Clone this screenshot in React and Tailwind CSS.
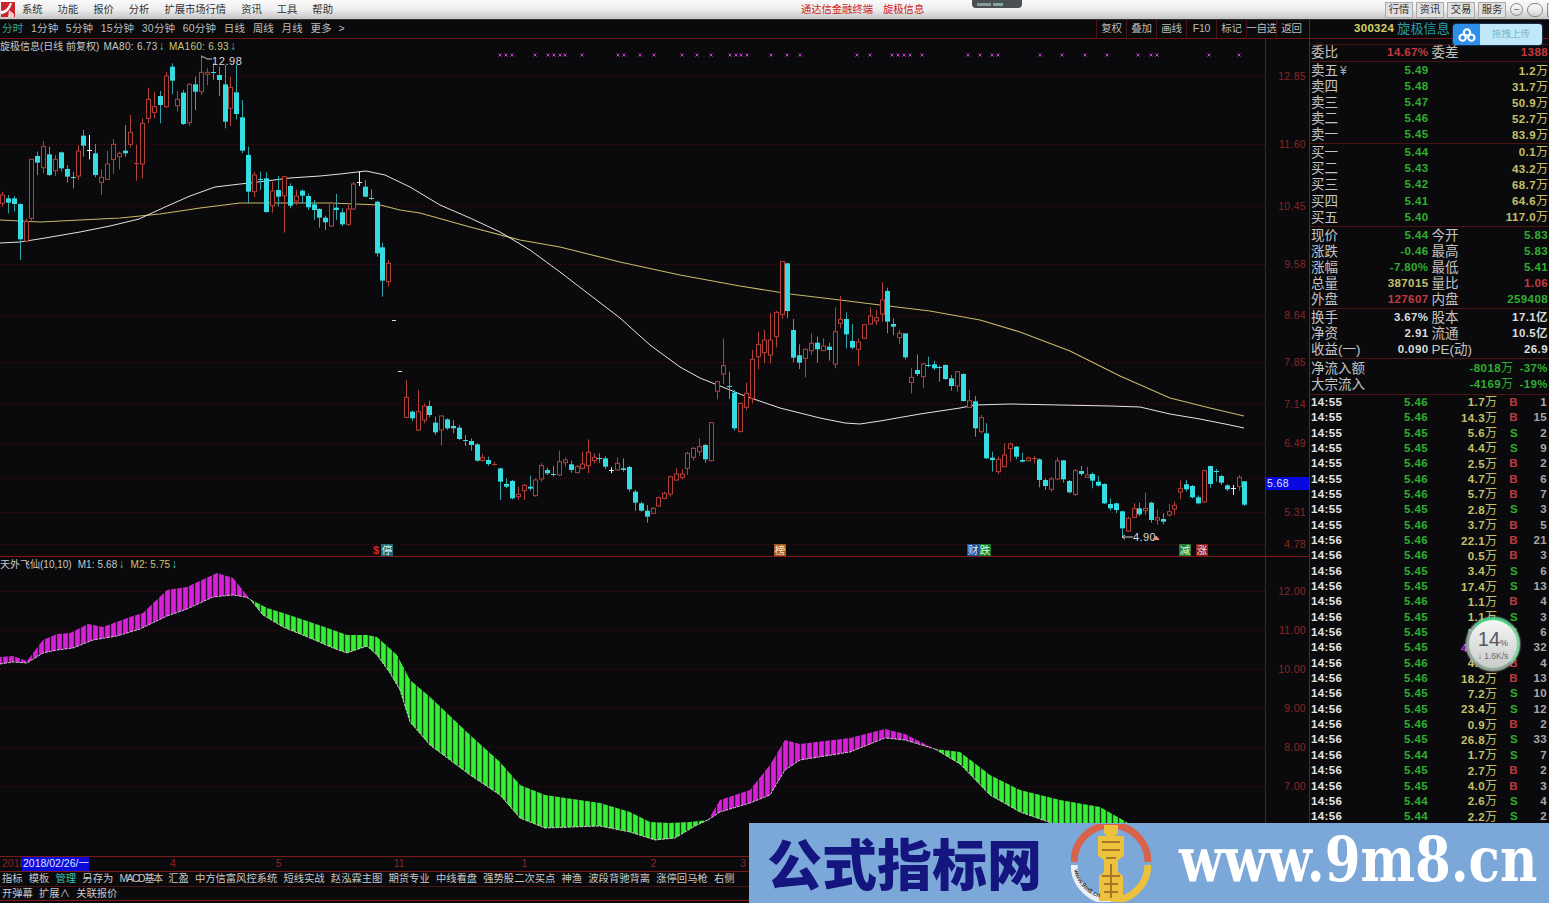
import React from 'react';

const BG = '#0a0a0c';
const CYAN = '#35dce2';
const RED = '#b2413a';

// candle data: [x, bodyTop, bodyBottom, high, low, type], y read off a 3x crop (see y0)
const seg1 = [
  [2,465,490,455,500,'r'],[8,475,488,465,520,'c'],[14,475,492,468,515,'c'],[20,492,598,490,660,'c'],[26,545,603,535,605,'r'],
  [31,358,535,358,548,'r'],[37,348,368,335,405,'c'],[43,320,383,303,400,'r'],[49,343,405,320,408,'c'],[55,358,392,345,408,'r'],
  [61,337,385,335,395,'c'],[67,387,410,375,428,'c'],[73,410,410,395,445,'c'],[78,333,408,315,420,'r'],[83,287,317,270,350,'c'],
  [89,330,330,285,358,'w'],[95,340,405,312,412,'c'],[101,412,427,388,465,'r'],[107,372,418,333,420,'r'],[113,313,358,297,402,'r'],
  [119,340,350,335,388,'r'],[125,332,340,255,350,'c'],[130,277,313,225,322,'r'],[136,370,370,315,422,'r'],[142,250,372,235,415,'r'],
  [148,178,235,143,250,'r'],[154,200,217,155,235,'r'],[160,168,195,153,250,'c'],[166,108,200,95,203,'r'],[172,80,122,70,163,'c'],
  [177,178,197,153,215,'r'],[183,158,252,150,255,'c'],[189,133,248,130,257,'r'],[195,133,155,110,210,'c'],[201,97,155,45,165,'r'],
  [207,97,103,85,135,'r'],[213,95,97,70,120,'c'],[219,105,120,80,168,'c'],[225,133,245,75,265,'c'],[230,142,205,110,258,'r'],
  [236,157,222,75,238,'c'],[242,232,332,180,340,'c'],[248,345,455,320,490,'c'],[254,405,455,395,472,'r'],[260,418,418,395,450,'c'],
  [266,415,516,397,518,'c'],[272,453,497,425,518,'r'],[278,450,470,408,500,'c'],[284,410,467,408,578,'r'],[290,438,497,430,505,'c'],
  [296,468,483,450,495,'r'],[302,452,467,448,490,'c'],[308,468,502,460,510,'c'],[314,493,510,480,540,'c'],[319,507,533,505,563,'c'],
  [325,533,547,527,570,'c'],[331,490,558,485,560,'r'],[336,503,510,462,540,'c'],[342,517,553,505,558,'c'],[348,507,553,495,558,'r'],
  [353,432,507,425,510,'r'],[359,425,425,395,438,'w'],[365,440,470,420,472,'c'],[371,475,475,448,480,'c'],[377,485,640,482,650,'c'],
  [382,622,722,608,770,'c'],[388,670,725,660,740,'r'],
];
const seg2 = [
  [406,292,352,240,355,'r'],[412,335,355,332,363,'c'],[418,335,390,270,393,'r'],[424,318,360,310,370,'r'],[429,318,345,302,352,'c'],
  [435,368,397,350,405,'c'],[441,348,390,345,437,'r'],[447,358,385,355,390,'c'],[453,378,385,360,400,'c'],[459,383,417,375,420,'c'],
  [465,420,420,405,438,'c'],[471,423,435,415,452,'c'],[477,433,482,430,485,'c'],[482,472,482,462,484,'r'],[488,480,492,470,498,'c'],
  [494,492,492,485,497,'r'],[500,505,545,503,600,'c'],[506,552,560,535,565,'c'],[512,543,595,540,598,'c'],[518,583,590,560,600,'r'],
  [524,556,572,552,600,'r'],[530,560,566,527,572,'c'],[535,540,587,535,590,'r'],[541,497,537,490,545,'r'],[547,510,520,503,525,'c'],
  [553,522,524,498,530,'c'],[559,485,525,452,528,'r'],[565,480,488,472,500,'r'],[571,493,510,482,518,'c'],[577,500,518,495,520,'r'],
  [582,492,505,455,508,'r'],[588,457,497,418,520,'r'],[594,472,482,460,490,'r'],[599,475,475,460,488,'c'],[605,475,500,468,507,'c'],
  [611,510,510,502,520,'w'],[617,490,510,473,512,'r'],[623,505,510,475,515,'c'],[629,501,568,498,575,'c'],[635,575,608,570,632,'c'],
  [641,610,632,605,635,'c'],[647,632,650,615,668,'c'],[653,625,640,622,642,'r'],[658,593,618,590,620,'r'],[664,580,595,575,598,'r'],
  [670,530,582,527,590,'r'],[676,522,540,505,542,'r'],[682,522,532,507,538,'r'],[687,460,505,455,525,'r'],[693,445,472,442,482,'r'],
  [699,440,455,415,467,'r'],[705,435,478,432,488,'c'],[711,368,482,366,484,'r'],
];
const seg3 = [
  [717,395,424,393,448,'r'],[723,347,372,265,402,'r'],[729,408,408,365,447,'c'],[734,428,535,420,542,'c'],[740,460,545,458,545,'r'],
  [746,430,472,398,480,'r'],[752,328,445,300,460,'r'],[758,283,320,245,358,'r'],[764,270,308,240,340,'r'],[770,270,315,190,340,'r'],
  [776,187,260,183,292,'r'],[782,35,193,35,207,'r'],[787,40,183,38,205,'c'],[793,240,323,207,337,'c'],[799,316,338,283,357,'c'],
  [805,298,325,295,382,'r'],[811,280,302,250,315,'r'],[817,278,298,260,338,'c'],[823,288,302,265,303,'r'],[829,290,300,278,332,'c'],
  [835,245,342,172,355,'r'],[840,208,220,138,235,'r'],[846,207,253,187,295,'c'],[852,273,293,222,298,'c'],[858,276,298,265,348,'r'],
  [864,224,265,222,267,'r'],[870,198,222,172,225,'r'],[876,203,213,180,225,'r'],[882,150,192,97,215,'r'],[887,123,215,113,250,'c'],
  [893,222,230,205,255,'c'],[899,250,263,240,282,'r'],[905,250,322,250,328,'c'],[911,382,397,355,430,'r'],[917,360,372,313,378,'c'],
  [923,342,380,338,415,'r'],[928,345,345,320,352,'c'],[934,343,355,332,360,'c'],[939,350,350,347,395,'c'],[945,345,387,343,390,'c'],
  [951,385,408,375,422,'c'],[957,365,408,363,425,'r'],[963,372,453,370,455,'c'],[969,452,472,420,474,'r'],[975,454,535,438,560,'c'],
  [981,503,545,495,550,'r'],[986,550,625,520,627,'c'],[992,623,630,605,665,'c'],[998,628,665,620,672,'r'],[1004,615,650,580,652,'r'],
  [1010,582,596,578,635,'r'],[1016,590,620,588,628,'c'],[1022,630,635,608,638,'c'],[1028,624,632,620,634,'r'],[1034,625,625,618,640,'r'],
  [1039,628,690,625,712,'c'],
];
const seg4 = [
  [1045,240,258,235,270,'c'],[1051,237,268,230,275,'r'],[1057,183,237,172,240,'r'],[1063,181,238,180,248,'c'],[1069,243,277,240,280,'c'],
  [1075,212,283,207,288,'r'],[1081,213,222,198,228,'c'],[1087,225,232,200,232,'r'],[1092,222,242,218,265,'c'],[1098,245,257,228,260,'c'],
  [1104,252,310,250,312,'c'],[1110,312,325,295,332,'c'],[1116,310,330,308,340,'c'],[1122,334,385,332,408,'c'],[1128,355,393,350,395,'r'],
  [1134,326,352,310,354,'r'],[1139,325,343,308,348,'c'],[1145,325,332,278,345,'r'],[1151,308,360,305,368,'c'],[1157,353,360,328,374,'r'],
  [1163,357,365,340,373,'c'],[1169,335,345,312,350,'r'],[1174,316,327,305,345,'r'],[1180,266,276,242,298,'r'],[1186,253,268,240,275,'c'],
  [1192,258,292,255,295,'c'],[1198,292,310,286,313,'c'],[1204,212,306,210,308,'r'],[1210,198,252,197,263,'c'],[1216,214,214,207,245,'c'],
  [1221,228,248,224,255,'c'],[1227,256,268,252,274,'c'],[1233,265,265,255,285,'w'],[1239,232,260,225,272,'r'],[1244,244,314,243,318,'c'],
];

const MA80 = '0,243 20,242 45,238 80,232 110,226 139,219 165,207 190,196 215,187 240,184 250,183 290,178 320,176 340,174 366,171 385,175 410,187 440,205 470,218 500,232 530,250 560,272 590,295 620,318 650,345 680,367 700,378 720,386 745,396 780,408 820,418 845,423 860,424 880,421 920,414 960,408 975,405 1010,404 1060,405 1110,406 1140,407 1170,414 1200,419 1230,425 1244,428';
const MA160 = '0,220 40,222 120,218 160,214 200,208 240,203 330,203 380,205 400,210 420,213 470,227 520,240 560,247 620,262 680,275 740,286 790,294 840,300 880,305 930,311 980,320 1020,332 1070,351 1120,376 1170,398 1210,408 1244,416';

const marks = [500,506,512,535,548,554,560,565,582,618,624,640,654,682,697,711,730,736,741,747,771,787,800,857,870,892,898,904,910,922,968,980,992,998,1040,1062,1085,1107,1138,1151,1157,1209,1239];
const mainAxis = [['12.85',76],['11.60',144],['10.45',206],['9.58',264],['8.64',315],['7.85',362],['7.14',404],['6.49',443],['5.31',512],['4.78',544]];
const subAxis = [['12.00',591],['11.00',630],['10.00',669],['9.00',708],['8.00',747],['7.00',786]];

// indicator ribbon outline, [x, y]
const bands = [
  { fill: '#d622d6', dark: '#2e0a2e', top: [[0,657],[13,656],[27,661],[43,640],[57,634],[70,633],[88,624],[103,627],[130,617],[143,613],[167,590],[187,587],[217,573],[233,578],[245,593],[250,599]],
    bot: [[0,664],[13,662],[27,663],[43,653],[57,650],[73,648],[93,640],[117,636],[140,629],[167,616],[187,609],[213,597],[233,595],[245,597],[250,599]] },
  { fill: '#35ee35', dark: '#0a3a0a', top: [[250,599],[267,608],[283,613],[310,622],[333,630],[347,635],[367,635],[377,637],[397,655],[410,680],[430,697],[470,735],[500,762],[520,785],[545,795],[600,803],[630,812],[650,822],[670,823],[690,822],[708,820]],
    bot: [[250,599],[263,615],[283,627],[310,638],[333,648],[347,653],[367,646],[377,655],[390,673],[400,690],[410,722],[430,745],[470,775],[500,795],[520,818],[545,828],[600,826],[630,832],[655,840],[675,838],[695,826],[708,820]] },
  { fill: '#d622d6', dark: '#2e0a2e', top: [[708,820],[720,800],[750,790],[770,765],[785,740],[800,744],[850,738],[885,729],[905,734],[935,749]],
    bot: [[708,820],[720,812],[750,803],[770,795],[785,770],[800,760],[850,752],[885,738],[905,740],[935,749]] },
  { fill: '#35ee35', dark: '#0a3a0a', top: [[935,749],[960,752],[990,775],[1020,790],[1060,800],[1100,807],[1130,824],[1140,830]],
    bot: [[935,749],[960,764],[990,795],[1020,812],[1060,826],[1100,830],[1140,830]] },
];

const at = (pts, x) => {
  for (let i = 1; i < pts.length; i++) {
    if (x <= pts[i][0]) {
      const [x0, y0] = pts[i - 1];
      const [x1, y1] = pts[i];
      return y0 + ((y1 - y0) * (x - x0)) / (x1 - x0);
    }
  }
  return pts[pts.length - 1][1];
};

function Candles({ data, y0 }) {
  return data.map(([x, t, b, h, l, type]) => {
    const color = type === 'c' ? CYAN : type === 'w' ? '#f0f0f0' : RED;
    const wick = type === 'c' ? '#2da5a9' : color;
    const top = y0 + t / 3;
    const bottom = y0 + b / 3;
    const flat = bottom - top < 1.5;
    return (
      <g key={x}>
        <line x1={x + 0.5} x2={x + 0.5} y1={y0 + h / 3} y2={y0 + l / 3} stroke={wick} />
        {flat ? (
          <line x1={x - 2} x2={x + 3} y1={Math.round(top) + 0.5} y2={Math.round(top) + 0.5} stroke={color} />
        ) : type === 'c' ? (
          <rect x={x - 2} y={top} width={5} height={bottom - top} fill={color} />
        ) : (
          <rect x={x - 1.5} y={top} width={4} height={bottom - top} fill={BG} stroke={color} />
        )}
      </g>
    );
  });
}

function Ribbon({ band }) {
  const bars = [];
  const stripes = [];
  const first = band.top[0][0];
  const last = Math.min(band.top[band.top.length - 1][0], band.bot[band.bot.length - 1][0]);
  for (let x = first; x < last; x++) {
    const seg = `M${x + 0.5} ${at(band.top, x + 0.5).toFixed(1)}V${at(band.bot, x + 0.5).toFixed(1)}`;
    if (x % 6 === 2) stripes.push(seg);
    else bars.push(seg);
  }
  return (
    <g>
      <path d={bars.join('')} stroke={band.fill} fill="none" />
      <path d={stripes.join('')} stroke={band.dark} strokeWidth="1.4" fill="none" />
      <polyline points={band.bot.map((p) => p.join(',')).join(' ')} fill="none" stroke="#e8e8e8" strokeWidth="0.8" strokeDasharray="3 1" />
    </g>
  );
}

function Badge({ x, bg, color, children }) {
  return (
    <g>
      <rect x={x - 6} y={544} width={12} height={12} fill={bg} />
      <text x={x} y={554} textAnchor="middle" fontSize="10.5" fill={color}>{children}</text>
    </g>
  );
}

function MainChart() {
  return (
    <svg width="1309" height="517" viewBox="0 39 1309 517" className="block">
      {mainAxis.concat([['', 478]]).map(([, y]) => (
        <line key={y} x1="0" x2="1265" y1={y + 0.5} y2={y + 0.5} stroke="#4a1414" strokeDasharray="1 3" />
      ))}
      <line x1="1265.5" x2="1265.5" y1="39" y2="556" stroke="#6e1616" />
      {marks.map((x) => (
        <path key={x} d={`M${x - 1.5} 53.5l3 3m0-3l-3 3`} stroke="#c83cc8" fill="none" />
      ))}
      <polyline points={MA160} fill="none" stroke="#c9b868" strokeWidth="1.1" />
      <polyline points={MA80} fill="none" stroke="#e4e4e4" strokeWidth="1" />
      <Candles data={seg1} y0={40} />
      <Candles data={seg2} y0={300} />
      <Candles data={seg3} y0={250} />
      <Candles data={seg4} y0={400} />
      <line x1="392" x2="396" y1="320.5" y2="320.5" stroke="#ddd" />
      <line x1="398" x2="402" y1="371.5" y2="371.5" stroke="#ddd" />
      {/* high / low tags */}
      <path d="M201 57h3l3 2h5" stroke="#ccc" fill="none" />
      <text x="212" y="65" fontSize="11" fill="#d8d8d8" letterSpacing="0.6">12.98</text>
      <path d="M1122 537h11M1122 537l3-2M1122 537l3 2" stroke="#ccc" fill="none" />
      <text x="1133" y="541" fontSize="11" fill="#d8d8d8" letterSpacing="0.4">4.90</text>
      <path d="M1153 539.5l3-3.500 3 3.500z" fill="#e88d78" stroke="#e88d78" />
      {/* event badges */}
      <text x="376" y="554" textAnchor="middle" fontSize="11" fontWeight="700" fill="#d52a2a">$</text>
      <Badge x={387} bg="#1f6d78" color="#d5f2f5">停</Badge>
      <Badge x={780} bg="#a85a1e" color="#ffe3c0">榜</Badge>
      <Badge x={973} bg="#1e4f9a" color="#d5e5ff">财</Badge>
      <Badge x={985} bg="#1f7a2a" color="#d5ffd5">跌</Badge>
      <Badge x={1185} bg="#2a7a2a" color="#d8ffd8">减</Badge>
      <Badge x={1202} bg="#8a1f24" color="#ffdede">涨</Badge>
      {mainAxis.map(([t, y]) => (
        <text key={t} x="1306" y={y + 4} textAnchor="end" fontSize="10.500" fill="#8c2525" letterSpacing="0.3">{t}</text>
      ))}
      <rect x="1266" y="477" width="43" height="13" fill="#0808e0" />
      <text x="1267" y="487" fontSize="10.500" fill="#dfe6ff" letterSpacing="0.4">5.68</text>
    </svg>
  );
}

function SubChart() {
  return (
    <svg width="1309" height="299" viewBox="0 557 1309 299" className="block">
      {subAxis.map(([, y]) => (
        <line key={y} x1="0" x2="1265" y1={y + 0.5} y2={y + 0.5} stroke="#4a1414" strokeDasharray="1 3" />
      ))}
      <line x1="1265.5" x2="1265.5" y1="557" y2="856" stroke="#6e1616" />
      {bands.map((b) => (
        <Ribbon key={b.top[0][0]} band={b} />
      ))}
      {subAxis.map(([t, y]) => (
        <text key={t} x="1306" y={y + 4} textAnchor="end" fontSize="10.500" fill="#8c2525" letterSpacing="0.3">{t}</text>
      ))}
    </svg>
  );
}

function Down() {
  return <span className="text-[#3cc4c8] ml-px font-bold text-[12px] leading-none">↓</span>;
}

const menu = ['系统', '功能', '报价', '分析', '扩展市场行情', '资讯', '工具', '帮助'];
const periods = ['1分钟', '5分钟', '15分钟', '30分钟', '60分钟', '日线', '周线', '月线', '更多'];
const tools = ['复权', '叠加', '画线', 'F10', '标记', '一自选', '返回'];
const tabsA = ['指标', '模板', '管理', '另存为', 'MACD基本', '汇盈', '中方信富风控系统', '短线实战', '赵泓霖主图', '期货专业', '中线看盘', '强势股二次买点', '神渔', '波段背驰背离', '涨停回马枪', '右侧'];
const tabsB = ['开弹幕', '扩展∧', '关联报价'];

const asks = [['卖五', '5.49', '1.2'], ['卖四', '5.48', '31.7'], ['卖三', '5.47', '50.9'], ['卖二', '5.46', '52.7'], ['卖一', '5.45', '83.9']];
const bids = [['买一', '5.44', '0.1'], ['买二', '5.43', '43.2'], ['买三', '5.42', '68.7'], ['买四', '5.41', '64.6'], ['买五', '5.40', '117.0']];

const G = 'text-[#2fae2f]';
const R = 'text-[#c23a40]';
const Y = 'text-[#c4c06a]';
const W = 'text-[#dcdcdc]';

const quote = [
  ['现价', '5.44', G, '今开', '5.83', G],
  ['涨跌', '-0.46', G, '最高', '5.83', G],
  ['涨幅', '-7.80%', G, '最低', '5.41', G],
  ['总量', '387015', Y, '量比', '1.06', R],
  ['外盘', '127607', R, '内盘', '259408', G],
];
const funda = [
  ['换手', '3.67%', W, '股本', '17.1亿', W],
  ['净资', '2.91', W, '流通', '10.5亿', W],
  ['收益(一)', '0.090', W, 'PE(动)', '26.9', W],
];

const trades = [
  ['14:55','5.46','1.7','B',1],['14:55','5.46','14.3','B',15],['14:55','5.45','5.6','S',2],['14:55','5.45','4.4','S',9],
  ['14:55','5.46','2.5','B',2],['14:55','5.46','4.7','B',6],['14:55','5.46','5.7','B',7],['14:55','5.45','2.8','S',3],
  ['14:55','5.46','3.7','B',5],['14:56','5.46','22.1','B',21],['14:56','5.46','0.5','B',3],['14:56','5.45','3.4','S',6],
  ['14:56','5.45','17.4','S',13],['14:56','5.46','1.1','B',4],['14:56','5.45','1.1','S',3],['14:56','5.45','5.2','S',6],
  ['14:56','5.45','41.5','S',32],['14:56','5.46','4.2','B',4],['14:56','5.46','18.2','B',13],['14:56','5.45','7.2','S',10],
  ['14:56','5.45','23.4','S',12],['14:56','5.46','0.9','B',2],['14:56','5.45','26.8','S',33],['14:56','5.44','1.7','S',7],
  ['14:56','5.45','2.7','B',2],['14:56','5.45','4.0','B',3],['14:56','5.44','2.6','S',4],['14:56','5.44','2.2','S',2],
];

function Label({ children }) {
  return <span className="text-[13.5px] text-[#c4c4c4] whitespace-nowrap leading-none">{children}</span>;
}

function Num({ className, children }) {
  return <span className={`text-[11.5px] font-bold tracking-[0.4px] whitespace-nowrap leading-none ${className}`}>{children}</span>;
}

function Wan() {
  return <span className="text-[12px] font-normal tracking-normal">万</span>;
}

function PairRow({ row }) {
  const [a, av, ac, b, bv, bc] = row;
  return (
    <div className="grid grid-cols-2 h-[16.25px] items-center">
      <div className="flex justify-between items-center pl-[1px] pr-[1px]">
        <Label>{a}</Label>
        <Num className={ac}>{av}</Num>
      </div>
      <div className="flex justify-between items-center pl-[2px] pr-[1px]">
        <Label>{b}</Label>
        <Num className={bc}>{bv}</Num>
      </div>
    </div>
  );
}

function LevelRow({ row, suffix }) {
  return (
    <div className="grid grid-cols-2 h-[16.25px] items-center">
      <div className="flex justify-between items-center pl-[1px] pr-[1px]">
        <Label>
          {row[0]}
          {suffix && <span className="text-[12px] text-[#aaa] ml-[2px]">¥</span>}
        </Label>
        <Num className={G}>{row[1]}</Num>
      </div>
      <div className="flex justify-end items-center pr-[1px]">
        <Num className={Y}>{row[2]}<Wan /></Num>
      </div>
    </div>
  );
}

function FlowRow({ label, a, b }) {
  return (
    <div className="flex items-center h-[16.25px] pl-[1px] pr-[1px]">
      <Label>{label}</Label>
      <Num className={`${G} ml-auto`}>{a}<Wan /></Num>
      <Num className={`${G} w-[35px] text-right`}>{b}</Num>
    </div>
  );
}

function TradeRow({ t, i }) {
  return (
    <div className="flex items-center h-[15.35px] pl-[1px] pr-[2px]">
      <Num className="text-[#e4e4e4] w-[75px]">{t[0]}</Num>
      <Num className={`${G} w-[42px] text-right`}>{t[1]}</Num>
      <Num className={`${i === 16 ? 'text-[#c63cc6]' : Y} w-[69px] text-right`}>{t[2]}<Wan /></Num>
      <Num className={`${t[3] === 'B' ? R : G} w-[21px] text-right`}>{t[3]}</Num>
      <Num className="text-[#a8a8a8] ml-auto">{t[4]}</Num>
    </div>
  );
}

function QuotePanel() {
  return (
    <div className="w-[240px] border-l border-[#7a1a1a] overflow-hidden">
      <div className="h-[5px]" />
      <div className="border-y border-[#4a1414] h-[18px] flex flex-col justify-center">
        <PairRow row={['委比', '14.67%', R, '委差', '1388', R]} />
      </div>
      <div className="border-b border-[#4a1414] h-[82px] pt-[1px] flex flex-col justify-center">
        {asks.map((r, i) => <LevelRow key={r[0]} row={r} suffix={i === 0} />)}
      </div>
      <div className="border-b border-[#4a1414] h-[83px] flex flex-col justify-center">
        {bids.map((r) => <LevelRow key={r[0]} row={r} />)}
      </div>
      <div className="border-b border-[#4a1414] h-[82px] pt-[1px] flex flex-col justify-center">
        {quote.map((r) => <PairRow key={r[0]} row={r} />)}
      </div>
      <div className="border-b border-[#4a1414] h-[50px] pt-[1px] flex flex-col justify-center">
        {funda.map((r) => <PairRow key={r[0]} row={r} />)}
      </div>
      <div className="border-b border-[#4a1414] h-[36px] flex flex-col justify-center">
        <FlowRow label="净流入额" a="-8018" b="-37%" />
        <FlowRow label="大宗流入" a="-4169" b="-19%" />
      </div>
      {trades.map((t, i) => <TradeRow key={i} t={t} i={i} />)}
    </div>
  );
}

function Logo() {
  return (
    <svg width="14" height="15" viewBox="0 0 14 15" className="ml-[1px] shrink-0">
      <rect width="14" height="15" fill="#c8262a" />
      <path d="M0 9C4 9 7 6 9 1l2 0C9 8 5 12 0 12z" fill="#fff" />
      <path d="M8 8l5 4v3H7z" fill="#f3c9c9" />
    </svg>
  );
}

function BaiduCloud() {
  return (
    <svg width="18" height="14" viewBox="0 0 20 16" fill="none" stroke="#fff" strokeWidth="2.4">
      <circle cx="10" cy="5" r="3.6" />
      <circle cx="5" cy="11" r="3.6" />
      <circle cx="15" cy="11" r="3.6" />
    </svg>
  );
}

function SiteLogo() {
  return (
    <svg width="80" height="78" viewBox="0 0 80 78" className="block">
      <defs>
        <path id="arcText" d="M3 46A37 37 0 0 0 30 74" />
      </defs>
      <path d="M3 38A36 36 0 0 1 77 38" fill="none" stroke="#d9634a" strokeWidth="7" />
      <path d="M77 41A37 37 0 0 1 40 77" fill="none" stroke="#ecc23c" strokeWidth="7" />
      <path d="M3 41A37 37 0 0 0 40 77" fill="none" stroke="#eaf0f8" strokeWidth="7" />
      <path d="M33 1h14v8l-3 3h9v20l-6 4v12l5 4v25H28V52l5-4V36l-6-4V12h9l-3-3z" fill="#ecc23c" />
      <path d="M31 18h18M31 26h18M35 34h10M31 52h18M33 60h14M33 68h14M40 40v34" stroke="#a5752a" strokeWidth="2" fill="none" />
      <text fontSize="6.500" fill="#3a3a3a" fontWeight="700">
        <textPath href="#arcText">www.9m8.cn</textPath>
      </text>
    </svg>
  );
}

export default function App() {
  return (
    <div className="relative w-[1549px] h-screen overflow-hidden bg-[#0a0a0c] font-['Liberation_Sans','Noto_Sans_CJK_SC',sans-serif] select-none">
      {/* title bar */}
      <div className="h-[20px] flex items-center bg-gradient-to-b from-[#fafafa] via-[#eeeeee] to-[#c4c4c4] border-b border-[#333] text-[10.3px] text-[#333] whitespace-nowrap">
        <Logo />
        <div className="flex gap-[15px] ml-[7px]">
          {menu.map((m) => <span key={m}>{m}</span>)}
        </div>
        <div className="flex gap-[10px] ml-[468px] text-[#d02020]">
          <span>通达信金融终端</span>
          <span>旋极信息</span>
        </div>
        <div className="flex items-center gap-[3px] ml-auto">
          {['行情', '资讯', '交易', '服务'].map((b) => (
            <span key={b} className="w-[28px] h-[16px] flex items-center justify-center bg-[#e0e0e0] border border-[#aaa]">{b}</span>
          ))}
          <span className="w-[13px] h-[13px] ml-[1px] rounded-full border border-[#888] flex items-center justify-center text-[#666]">−</span>
          <span className="w-[16px] h-[14px] ml-[1px] rounded-full border border-[#888]" />
          <span className="w-[2px] h-[14px] ml-[1px] rounded-l-full border border-r-0 border-[#888]" />
        </div>
      </div>
      <div className="absolute left-[972px] top-0 w-[50px] h-[8px] bg-[#4a4f52] rounded-b-[4px] flex items-center gap-[2px] px-[5px]">
        <span className="w-[14px] h-[3px] bg-[#8a9a9a]" />
        <span className="w-[10px] h-[3px] bg-[#7ea7a0]" />
      </div>

      {/* period + tools bar */}
      <div className="h-[19px] flex items-center border-b border-[#6e1616] text-[10.5px] text-[#bcbcbc] tracking-[0.2px] whitespace-nowrap">
        <div className="flex items-center gap-[7.500px] pl-[2px] w-[1096px]">
          <span className="text-[#39a897]">分时</span>
          {periods.map((p) => <span key={p}>{p}</span>)}
          <span className="-ml-[1px]">&gt;</span>
        </div>
        <div className="flex h-full w-[213px]">
          {tools.map((t) => (
            <span key={t} className="w-[30px] flex items-center justify-center border-l border-[#4a1414] tracking-tight">{t}</span>
          ))}
        </div>
        <div className="flex items-center gap-[3px] w-[240px] pl-[44px] border-l border-[#7a1a1a] h-full">
          <span className="text-[11.5px] font-bold text-[#d6d266] tracking-[0.3px]">300324</span>
          <span className="text-[13px] text-[#2b9ca8]">旋极信息</span>
        </div>
      </div>
      <div className="absolute left-[1453px] top-[24px] w-[89px] h-[21px] rounded-[3px] overflow-hidden flex shadow-[0_0_2px_#2f8ff0]">
        <div className="w-[27px] bg-[#2e8fe8] flex items-center justify-center">
          <BaiduCloud />
        </div>
        <div className="flex-1 bg-[#bfe8f8] flex items-center justify-center text-[9.500px] text-[#7cb8d0]">拖拽上传</div>
      </div>

      <div className="flex h-[864px]">
        <div className="w-[1309px] shrink-0 flex flex-col">
          {/* kline pane */}
          <div className="relative border-b border-[#7a1a1a]">
            <MainChart />
            <div className="absolute left-0 top-0 flex gap-[4px] items-center text-[10px] tracking-[0.3px] whitespace-nowrap text-[#c8c8c8]">
              <span className="tracking-normal text-[10px]">旋极信息(日线 前复权)</span>
              <span>MA80: 6.73<Down /></span>
              <span className="text-[#c8c878]">MA160: 6.93<Down /></span>
            </div>
          </div>
          {/* indicator pane */}
          <div className="relative">
            <SubChart />
            <div className="absolute left-0 top-0 flex gap-[6px] items-center text-[10px] tracking-[0.1px] whitespace-nowrap text-[#c8c8c8]">
              <span className="tracking-normal">天外飞仙(10,10)</span>
              <span>M1: 5.68<Down /></span>
              <span className="text-[#c8c878]">M2: 5.75<Down /></span>
            </div>
          </div>
          {/* date axis */}
          <div className="h-[16px] flex items-center border-y border-[#7a1a1a] text-[10.5px] text-[#8c2525]">
            <span className="w-[22px] pl-[2px]">2018</span>
            <span className="w-[67px] h-full flex items-center pl-[1px] bg-[#0a0ad8] text-[#dfe6ff]">2018/02/26/一</span>
            <span className="ml-[81px]">4</span>
            <span className="ml-[100px]">5</span>
            <span className="ml-[112px]">11</span>
            <span className="ml-[117px]">1</span>
            <span className="ml-[123px]">2</span>
            <span className="ml-[84px]">3</span>
          </div>
          {/* template tabs */}
          <div className="h-[15px] flex items-center gap-[6.200px] pl-[2px] border-b border-[#4a1414] text-[10.3px] text-[#c8c8c8] whitespace-nowrap">
            {tabsA.map((t) => (
              <span key={t} className={t === '管理' ? 'text-[#3fc4b4]' : t === 'MACD基本' ? 'tracking-[-1.4px]' : ''}>{t}</span>
            ))}
          </div>
          <div className="h-[14px] flex items-center gap-[6.200px] pl-[2px] border-b border-[#7a1a1a] text-[10.3px] text-[#c8c8c8] whitespace-nowrap">
            {tabsB.map((t) => <span key={t}>{t}</span>)}
          </div>
        </div>
        <QuotePanel />
      </div>

      {/* network speed float */}
      <div className="absolute left-[1466px] top-[617px] w-[54px] h-[54px] rounded-full bg-gradient-to-b from-[#f4f6f4] to-[#c9cdca] border-[3px] border-[#8fa698] border-t-[#46cf80] border-r-[#7fd49c] flex flex-col items-center justify-center shadow-[0_0_2px_#fff]">
        <div className="text-[#556] leading-none mt-[2px]">
          <span className="text-[20px]">14</span><span className="text-[9px]">%</span>
        </div>
        <div className="text-[8.500px] text-[#667] leading-none mt-[3px] whitespace-nowrap">↓ 1.6K/s</div>
      </div>

      {/* site watermark */}
      <div className="absolute left-[749px] top-[823px] w-[800px] h-[80px] bg-[#7ba8d9] flex items-center">
        <span className="ml-[18px] w-[275px] shrink-0 text-[55px] font-black leading-none -mt-[4px] text-[#15157f] whitespace-nowrap font-['Noto_Sans_CJK_SC',sans-serif]">公式指标网</span>
        <div className="ml-[29px] shrink-0"><SiteLogo /></div>
        <span className="ml-[28px] shrink-0 text-[62px] font-bold leading-none -mt-[6px] text-white whitespace-nowrap font-['DejaVu_Serif',serif] origin-left scale-x-[0.83]">www.9m8.cn</span>
      </div>
    </div>
  );
}
